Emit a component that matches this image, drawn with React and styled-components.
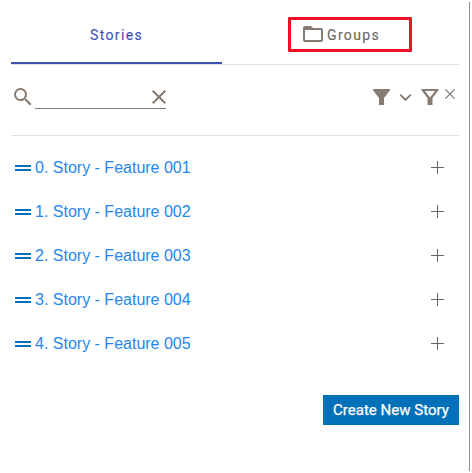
import React from "react";
import styled, { createGlobalStyle } from "styled-components";

const GlobalStyle = createGlobalStyle`
  * { box-sizing: border-box; }
  body { margin: 0; background: #fff; }
`;

const Panel = styled.main`
  width: 470px;
  height: 469px;
  margin-top: 2px;
  padding: 0 10px 0 11px;
  border-right: 1px solid #8f8f8f;
  display: flex;
  flex-direction: column;
`;

const Tabs = styled.nav`
  display: flex;
  flex: none;
  height: 63px;
  border-bottom: 1px solid #e0e0e0;
`;

const Tab = styled.button`
  width: ${(p) => p.$width}px;
  height: 62px;
  padding: ${(p) => (p.$active ? 6 : 0)}px 0 0;
  border: 0;
  border-bottom: 2px solid ${(p) => (p.$active ? "#3f51b5" : "transparent")};
  background: none;
  color: ${(p) => (p.$active ? "#3f51b5" : "#6b6866")};
  font: 400 14px/20px Roboto, sans-serif;
  -webkit-text-stroke: 0.1px currentColor;
  letter-spacing: 1.35px;
  display: flex;
  align-items: center;
  justify-content: center;
`;

const Highlight = styled.span`
  width: 124px;
  height: 35px;
  margin-left: 19px;
  margin-top: 5px;
  border: 3px solid #eb1024;
  border-radius: 1px;
  padding-left: 10px;
  display: flex;
  align-items: center;
  gap: 2px;
`;

const Icon = styled.svg`
  width: ${(p) => p.$size || 24}px;
  height: ${(p) => p.$size || 24}px;
  flex: none;
  display: block;
  fill: #877a70;
`;

const FolderIcon = styled(Icon)`
  margin-bottom: 1px;
`;

const Toolbar = styled.section`
  display: flex;
  flex: none;
  height: 71px;
  padding-top: 20px;
  border-bottom: 1px solid #e0e0e0;
`;

const SearchField = styled.div`
  width: 131px;
  height: 24px;
  border-bottom: 1px solid #877a70;
  display: flex;
  justify-content: flex-end;
`;

const ClearButton = styled.span`
  height: 24px;
  margin-right: -5px;
`;

const Filters = styled.div`
  display: flex;
  margin-left: auto;
`;

const ClearMark = styled(Icon)`
  margin: 4px 4px 0 3px;
`;

const StoryList = styled.ul`
  list-style: none;
  margin: 10px 0 0;
  padding: 0;
`;

const StoryRow = styled.li`
  height: 44px;
  display: flex;
  align-items: center;
  padding: 0 15px 0 4px;
`;

const DragHandle = styled.span`
  width: 16px;
  height: 6px;
  margin-right: 4px;
  border: solid #0071b9;
  border-width: 2px 0;
`;

const StoryLink = styled.span`
  flex: 1;
  color: #2486ee;
  font: 16px/20px "Liberation Sans", Arial, sans-serif;
`;

const AddIcon = styled(Icon)`
  margin-bottom: 1px;
`;

const CreateButton = styled.button`
  align-self: flex-end;
  width: 136px;
  height: 30px;
  margin-top: 29px;
  padding: 0;
  border: 0;
  background: #0071b9;
  color: #fff;
  font: 400 15px/30px Roboto, sans-serif;
  -webkit-text-stroke: 0.25px currentColor;
  letter-spacing: 0.02px;
  white-space: nowrap;
`;

const stories = ["001", "002", "003", "004", "005"];

export default function App() {
  return (
    <>
      <GlobalStyle />
      <Panel>
        <Tabs>
          <Tab $active $width={211}>Stories</Tab>
          <Tab $width={237}>
            <Highlight>
              <FolderIcon viewBox="0 0 24 24">
                <path d="M20 6h-8l-2-2H4c-1.1 0-2 .9-2 2v12c0 1.1.9 2 2 2h16c1.1 0 2-.9 2-2V8c0-1.1-.9-2-2-2zm0 12H4V8h16v10z" />
              </FolderIcon>
              Groups
            </Highlight>
          </Tab>
        </Tabs>
        <Toolbar>
          <Icon viewBox="0 0 24 24">
            <path d="M15.5 14h-.79l-.28-.27A6.47 6.47 0 0 0 16 9.5 6.5 6.5 0 1 0 9.5 16c1.61 0 3.09-.59 4.23-1.57l.27.28v.79l5 4.99L20.49 19l-4.99-5zm-6 0C7.01 14 5 11.99 5 9.5S7.01 5 9.5 5 14 7.01 14 9.5 11.99 14 9.5 14z" />
          </Icon>
          <SearchField>
            <ClearButton>
              <Icon viewBox="0 0 24 24">
                <path d="M19 6.41 17.59 5 12 10.59 6.41 5 5 6.41 10.59 12 5 17.59 6.41 19 12 13.41 17.59 19 19 17.59 13.41 12z" />
              </Icon>
            </ClearButton>
          </SearchField>
          <Filters>
            <Icon viewBox="0 0 24 24">
              <path d="M3 4h17v1.2L14 13v7H9v-7L3 5.2z" />
            </Icon>
            <Icon viewBox="0 0 24 24">
              <path d="M16.1 9 11.5 13.6 6.9 9 5.6 10.3l5.9 5.9 5.9-5.9z" />
            </Icon>
            <Icon viewBox="0 0 24 24">
              <path fillRule="evenodd" d="M3.5 4h17v1.2L14.5 13v7h-5v-7L3.5 5.2zM7 6l5 6.6L17 6z" />
            </Icon>
            <ClearMark $size={10} viewBox="0 0 10 10">
              <path d="M.4.4 9.6 9.6M9.6.4.4 9.6" stroke="#77706a" strokeWidth="1.1" />
            </ClearMark>
          </Filters>
        </Toolbar>
        <StoryList>
          {stories.map((number, index) => (
            <StoryRow key={number}>
              <DragHandle />
              <StoryLink>{index}. Story - Feature {number}</StoryLink>
              <AddIcon $size={13} viewBox="0 0 13 13">
                <path d="M6 0h1v6h6v1H7v6H6V7H0V6h6z" fill="#666" />
              </AddIcon>
            </StoryRow>
          ))}
        </StoryList>
        <CreateButton>Create New Story</CreateButton>
      </Panel>
    </>
  );
}
